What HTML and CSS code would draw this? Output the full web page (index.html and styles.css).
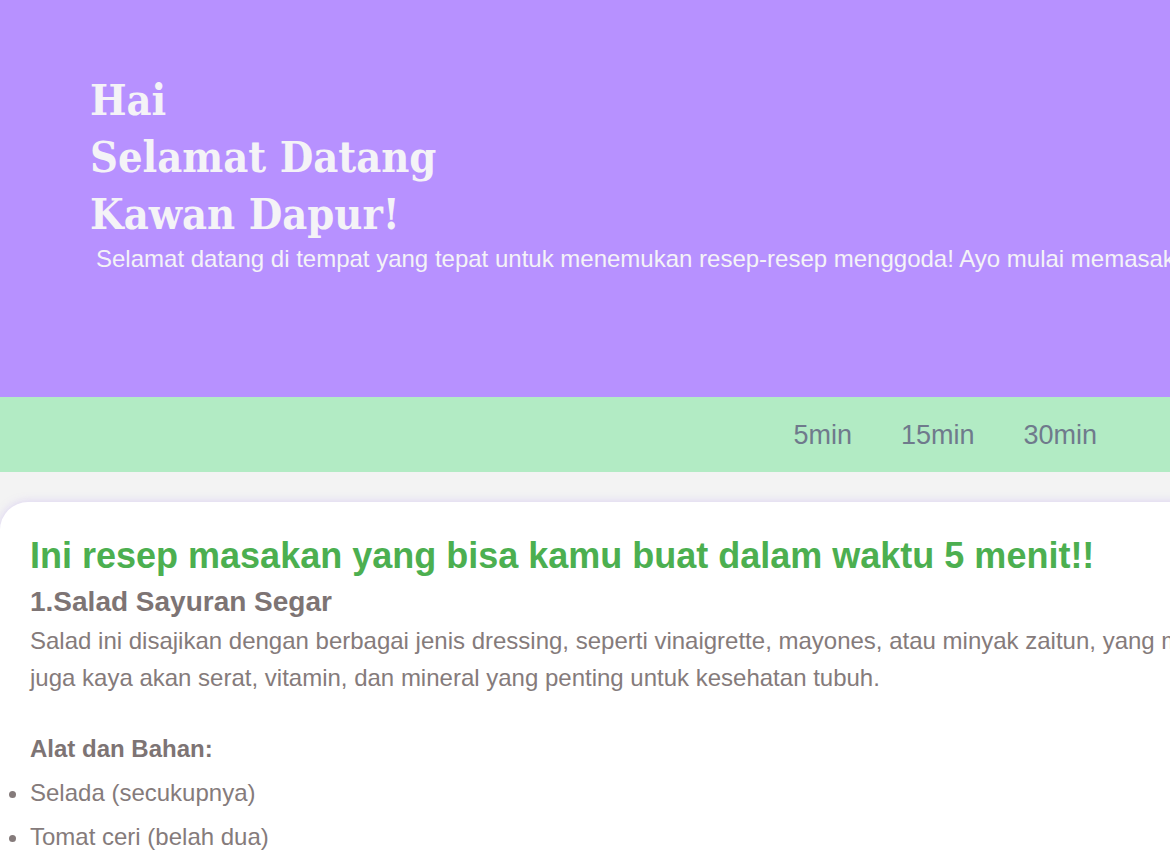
FILE: index.html
```html
<!DOCTYPE html>
<html lang="id">
<head>
<meta charset="utf-8">
<title>Kawan Dapur</title>
<link rel="stylesheet" href="styles.css">
</head>
<body>
<header class="hero">
  <h1 class="hero-title">Hai<br>Selamat Datang<br>Kawan Dapur!</h1>
  <p class="hero-text">Selamat datang di tempat yang tepat untuk menemukan resep-resep menggoda! Ayo mulai memasak bersama kami dan temukan inspirasi baru setiap hari.</p>
</header>
<nav class="time-nav">
  <a class="time-link" href="#">5min</a>
  <a class="time-link" href="#">15min</a>
  <a class="time-link" href="#">30min</a>
</nav>
<main class="content">
  <section class="card">
    <h1 class="card-title">Ini resep masakan yang bisa kamu buat dalam waktu 5 menit!!</h1>
    <h2 class="recipe-title">1.Salad Sayuran Segar</h2>
    <p class="recipe-desc">Salad ini disajikan dengan berbagai jenis dressing, seperti vinaigrette, mayones, atau minyak zaitun, yang memberikan rasa segar dan lezat. Salad ini<br>juga kaya akan serat, vitamin, dan mineral yang penting untuk kesehatan tubuh.</p>
    <p class="label"><strong>Alat dan Bahan:</strong></p>
    <ul class="ingredients">
      <li>Selada (secukupnya)</li>
      <li>Tomat ceri (belah dua)</li>
      <li>Mentimun (iris tipis)</li>
      <li>Wortel (parut)</li>
    </ul>
  </section>
</main>
</body>
</html>
```
FILE: styles.css
```css
html, body {
  margin: 0;
  padding: 0;
  overflow-x: hidden;
}
body {
  background: #f3f3f3;
  font-family: "Liberation Sans", Arial, sans-serif;
}
.hero {
  background: #b791ff;
  height: 397px;
  box-sizing: border-box;
  padding: 72px 0 0 90px;
}
.hero-title {
  margin: 0;
  font-family: "DejaVu Serif", "Liberation Serif", serif;
  font-stretch: condensed;
  font-weight: bold;
  font-size: 43px;
  line-height: 57px;
  color: #f4f3f7;
}
.hero-text {
  margin: 2px 0 0;
  padding-left: 6px;
  font-size: 24px;
  color: #f4f3f7;
  white-space: nowrap;
}
.time-nav {
  background: #b2ebc4;
  height: 75px;
  display: flex;
  align-items: center;
  justify-content: flex-end;
  gap: 49px;
  padding-right: 73px;
}
.time-link {
  font-size: 27px;
  color: #6f7a8c;
  text-decoration: none;
  margin-top: 1px;
}
.content {
  padding-top: 30px;
}
.card {
  width: 1700px;
  background: #ffffff;
  border-radius: 28px 28px 0 0;
  box-shadow: 0 0 10px rgba(170, 140, 240, 0.35);
  padding: 33px 30px 30px;
  color: #857b7b;
}
.card-title {
  margin: 0 0 9px;
  font-size: 36px;
  font-weight: bold;
  color: #4caf50;
}
.recipe-title {
  margin: 0;
  font-size: 28px;
  font-weight: bold;
  color: #7d7474;
}
.recipe-desc {
  margin: 4px 0 0;
  font-size: 24px;
  line-height: 37px;
}
.label {
  margin: 34px 0 0;
  font-size: 24px;
  line-height: 38px;
  color: #7d7474;
}
.ingredients {
  margin: 3px 0 0;
  padding: 0;
  font-size: 24px;
  line-height: 38px;
}
.ingredients li {
  padding: 3px 0;
}
```
